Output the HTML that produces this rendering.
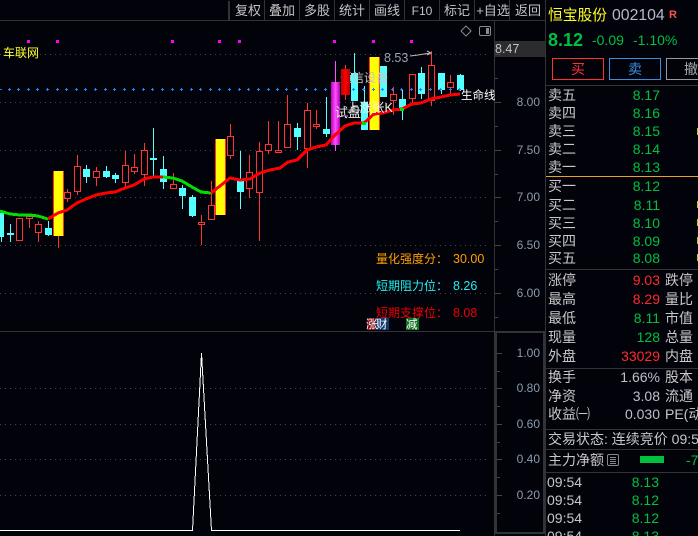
<!DOCTYPE html>
<html><head><meta charset="utf-8"><style>
html,body{margin:0;padding:0;background:#02020a;overflow:hidden}
svg{display:block}
text{font-family:"Liberation Sans","Noto Sans CJK SC",sans-serif;font-size:14px}
.tb{fill:#c4c4c4;font-size:13px;text-anchor:middle}
.ax{fill:#8c9bab;font-size:12px;text-anchor:end}
.lb{fill:#c8c8c8}
.g{fill:#00c040}
.r{fill:#ff2a2a}
.e{text-anchor:end;font-size:14px}
</style></head><body>
<svg width="698" height="536" viewBox="0 0 698 536" xmlns="http://www.w3.org/2000/svg">
<defs>
<linearGradient id="mg" x1="0" x2="1" y1="0" y2="0"><stop offset="0" stop-color="#c000c0"/><stop offset=".5" stop-color="#ff50ff"/><stop offset="1" stop-color="#b000b0"/></linearGradient>
<linearGradient id="rg" x1="0" x2="1" y1="0" y2="0"><stop offset="0" stop-color="#c00000"/><stop offset=".5" stop-color="#ff0000"/><stop offset="1" stop-color="#b00000"/></linearGradient>
</defs>
<rect width="698" height="536" fill="#02020a"/>

<!-- frame -->
<g shape-rendering="crispEdges">
<path d="M0 20.5H545M0 331.5H545M494.5 21V536M545.5 0V536" stroke="#333" fill="none"/>
<path d="M229 1V20" stroke="#333" stroke-width="2"/>
<path d="M264.5 0V20M299.5 0V20M334.5 0V20M369.5 0V20M404.5 0V20M439.5 0V20M474.5 0V20M509.5 0V20" stroke="#333"/>
<rect x="495" y="41" width="50" height="16" fill="#2c2c2f"/>
<rect x="496" y="332" width="48" height="201" fill="none" stroke="#333" stroke-width="2"/>
<path d="M0 54.5H490M0 102.5H490M0 150.5H490M0 197.5H490M0 245.5H490M0 293.5H490M0 388.5H490M0 424.5H490M0 459.5H490M0 495.5H490" stroke="#444" stroke-dasharray="1 4" fill="none"/>
<path d="M495 54.5h6M495 78.5h3M495 102.5h6M495 126.5h3M495 150.5h6M495 174.5h3M495 197.5h6M495 221.5h3M495 245.5h6M495 269.5h3M495 293.5h6M495 317.5h3M497 353.5h5M497 371.5h3M497 388.5h5M497 406.5h3M497 424.5h5M497 442.5h3M497 459.5h5M497 477.5h3M497 495.5h5M497 513.5h3" stroke="#444" fill="none"/>
<!-- magenta marks -->
<path d="M27 40h3v3h-3zM56 40h3v3h-3zM171 40h3v3h-3zM218 40h3v3h-3zM238 40h3v3h-3zM333 40h3v3h-3zM372 40h3v3h-3zM410 40h3v3h-3z" fill="#ff00ff"/>

<!-- red hollow candles -->
<path fill="none" stroke="#ff3333" d="M16.5 218.5h6v22h-6zM26.5 216.5h6v2h-6zM29.5 218V228M35.5 224.5h6v8h-6zM38.5 221V224M38.5 232V242M64.5 192.5h6v6h-6zM67.5 189V192M67.5 198V202M74.5 166.5h6v25h-6zM77.5 155V166M77.5 191V195M93.5 171.5h6v6h-6zM96.5 167V171M96.5 177V186M122.5 165.5h6v17h-6zM125.5 151V165M125.5 182V187M131.5 167.5h6v4h-6zM134.5 154V167M134.5 171V174M141.5 150.5h6v24h-6zM144.5 143V150M144.5 174V186M170.5 184.5h6v4h-6zM173.5 173V184M198.5 222.5h6v2h-6zM201.5 215V222M201.5 225V245M208.5 205.5h6v14h-6zM211.5 181V205M211.5 219V220M227.5 136.5h6v19h-6zM230.5 124V136M230.5 155V159M246.5 172.5h6v16h-6zM249.5 155V172M249.5 188V198M256.5 151.5h6v41h-6zM259.5 142V151M259.5 192V241M265.5 144.5h6v6h-6zM268.5 121V144M268.5 150V154M275.5 150.5h6v2h-6zM278.5 121V150M284.5 124.5h6v23h-6zM287.5 95V124M304.5 110.5h6v38h-6zM307.5 103V110M307.5 149V168M313.5 124.5h6v2h-6zM316.5 110V124M316.5 126V129M390.5 94.5h6v6h-6zM393.5 87V94M393.5 100V115M409.5 74.5h6v24h-6zM412.5 98V103M428.5 65.5h6v35h-6zM431.5 51V65M431.5 100V106M447.5 82.5h6v5h-6zM450.5 75V82M450.5 87V95M58.5 236V248"/>
<!-- cyan wicks -->
<path fill="none" stroke="#54ffff" d="M1.5 237V242M10.5 224V242M48.5 221V236M86.5 165V183M106.5 166V178M115.5 173V183M153.5 128V176M163.5 156V189M182.5 185V209M192.5 195V217M240.5 151V209M297.5 123V150M326.5 97V137M354.5 53V101M364.5 86V102M402.5 89V120M421.5 67V99M441.5 73V94M460.5 74V91"/>
<!-- cyan bodies -->
<path fill="#54ffff" d="M0 213h4v24H0zM7 233h7v2H7zM45 228h7v7h-7zM83 169h7v8h-7zM103 171h7v6h-7zM112 175h7v4h-7zM150 158h7v2h-7zM160 169h7v13h-7zM179 188h7v8h-7zM189 197h7v19h-7zM237 180h7v12h-7zM294 128h7v9h-7zM323 129h7v5h-7zM351 73h7v28h-7zM361 102h7v28h-7zM380 66h7v31h-7zM399 99h7v10h-7zM418 73h7v21h-7zM438 73h7v17h-7zM457 75h7v15h-7z"/>
<!-- yellow -->
<rect x="53" y="171" width="11" height="65" fill="#ff3030"/><rect x="54" y="171" width="9" height="65" fill="#ffff00"/>
<rect x="215" y="139" width="11" height="76" fill="#ff3030"/><rect x="216" y="139" width="9" height="76" fill="#ffff00"/>
<rect x="369" y="57" width="11" height="73" fill="#ff3030"/><rect x="370" y="57" width="9" height="73" fill="#ffff00"/>
</g>
<text x="340" y="82" style="font-size:12px;fill:#c8c8c8">通信设备</text>
<g shape-rendering="crispEdges">
<!-- magenta & red -->
<path d="M335.5 61V151" stroke="#ff50ff"/><rect x="331" y="82" width="9" height="63" fill="url(#mg)"/>
<path d="M345.5 65V100" stroke="#ff3030"/><rect x="341" y="69" width="9" height="26" fill="url(#rg)"/>
<!-- blue plus -->
<path fill="none" stroke="#1e80ff" d="M-1 89.5h3M8 89.5h3M9.5 88v3M17 89.5h3M18.5 88v3M27 89.5h3M28.5 88v3M36 89.5h3M37.5 88v3M46 89.5h3M47.5 88v3M56 89.5h3M57.5 88v3M65 89.5h3M66.5 88v3M75 89.5h3M76.5 88v3M84 89.5h3M85.5 88v3M94 89.5h3M95.5 88v3M104 89.5h3M105.5 88v3M113 89.5h3M114.5 88v3M123 89.5h3M124.5 88v3M132 89.5h3M133.5 88v3M142 89.5h3M143.5 88v3M151 89.5h3M152.5 88v3M161 89.5h3M162.5 88v3M171 89.5h3M172.5 88v3M180 89.5h3M181.5 88v3M190 89.5h3M191.5 88v3M199 89.5h3M200.5 88v3M209 89.5h3M210.5 88v3M218 89.5h3M219.5 88v3M228 89.5h3M229.5 88v3M238 89.5h3M239.5 88v3M247 89.5h3M248.5 88v3M257 89.5h3M258.5 88v3M267 89.5h3M268.5 88v3M276 89.5h3M277.5 88v3M285 89.5h3M286.5 88v3M295 89.5h3M296.5 88v3M305 89.5h3M306.5 88v3M314 89.5h3M315.5 88v3M324 89.5h3M325.5 88v3M352 89.5h3M353.5 88v3M362 89.5h3M363.5 88v3M372 89.5h3M373.5 88v3M381 89.5h3M382.5 88v3M391 89.5h3M392.5 88v3M400 89.5h3M401.5 88v3M410 89.5h3M411.5 88v3M419 89.5h3M420.5 88v3M429 89.5h3M430.5 88v3M439 89.5h3M440.5 88v3M449 89.5h3M450.5 88v3M458 89.5h3M459.5 88v3"/>
</g>

<!-- MA line -->
<g fill="none" stroke-width="3" stroke-linejoin="bevel" shape-rendering="crispEdges">
<polyline stroke="#00e000" points="0,211 10,214 20,215 30,215 38,216 48,219"/>
<polyline stroke="#ff0000" points="48,219 58,213 67,210 77,203 86,199 96,195 106,193 115,192 125,188 134,185 144,179 153,177 163,177"/>
<polyline stroke="#00e000" points="163,177 173,178 182,181 192,187 201,192 211,193"/>
<polyline stroke="#ff0000" points="211,193 220,186 230,178 240,180 250,179 260,173 270,170 280,168 288,162 297,160 307,150 316,147 326,145 335,135 345,126 354,123 364,123 374,114 383,113 393,110 402,109 412,104 421,103 431,99 441,97 450,95 460,94"/>
<path stroke="#00e000" d="M362 123.5h4M400 109.5h4"/>
</g>

<!-- lower chart -->
<g fill="none" stroke="#fff" shape-rendering="crispEdges">
<path d="M0 530.5H192.5L201.5 353L211.5 530.5H460"/>
</g>

<!-- icons -->
<path d="M466 26l5 5-5 5-5-5z" fill="none" stroke="#8a8a8a"/>
<rect x="479.5" y="26.5" width="11" height="9" rx="1.5" fill="none" stroke="#8a8a8a"/><rect x="486" y="28" width="3" height="6" fill="#8a8a8a"/>

<!-- toolbar -->
<text class="tb" x="248" y="15">复权</text>
<text class="tb" x="282" y="15">叠加</text>
<text class="tb" x="317" y="15">多股</text>
<text class="tb" x="352" y="15">统计</text>
<text class="tb" x="387" y="15">画线</text>
<text class="tb" x="422" y="15" style="font-size:12px">F10</text>
<text class="tb" x="457" y="15">标记</text>
<text class="tb" x="493" y="15">+自选</text>
<text class="tb" x="528" y="15">返回</text>

<!-- chart labels -->
<text x="3" y="57" style="font-size:12px;fill:#ffff30">车联网</text>
<text x="384" y="62" style="font-size:12.5px;fill:#9aa4ae">8.53</text>
<path d="M410 56l8-1 6-1 7-1m-4-2l4 2-4 2" fill="none" stroke="#bbb"/>
<text x="335" y="117" style="font-size:13px;fill:#e8e8e8">试盘</text>
<text x="347" y="112" style="font-size:12.5px;fill:#f4f4f4">上涨张K</text>
<text x="461" y="99" style="font-size:11.5px;fill:#fff">生命线</text>
<text x="376" y="263" style="font-size:12px;fill:#ffa000">量化强度分：</text><text x="453" y="263" style="font-size:12.5px;fill:#ffa000">30.00</text>
<text x="376" y="290" style="font-size:12px;fill:#20f0f0">短期阻力位：</text><text x="453" y="290" style="font-size:12.5px;fill:#20f0f0">8.26</text>
<text x="376" y="317" style="font-size:12px;fill:#ee0000">短期支撑位：</text><text x="453" y="317" style="font-size:12.5px;fill:#ee0000">8.08</text>
<g shape-rendering="crispEdges"><rect x="367" y="318" width="9" height="12" fill="#801018"/><rect x="376" y="318" width="13" height="12" fill="#103870"/><rect x="406" y="318" width="13" height="12" fill="#107020"/></g>
<text x="366" y="328" style="font-size:11.5px;fill:#fff">涨</text>
<text x="376" y="328" style="font-size:11.5px;fill:#fff">财</text>
<text x="406" y="328" style="font-size:11.5px;fill:#fff">减</text>

<!-- axis -->
<text x="495" y="53" style="font-size:12.5px;fill:#c4c4c4">8.47</text>
<text class="ax" x="540" y="106">8.00</text>
<text class="ax" x="540" y="154">7.50</text>
<text class="ax" x="540" y="201">7.00</text>
<text class="ax" x="540" y="249">6.50</text>
<text class="ax" x="540" y="297">6.00</text>
<text class="ax" x="540" y="357">1.00</text>
<text class="ax" x="540" y="392">0.80</text>
<text class="ax" x="540" y="428">0.60</text>
<text class="ax" x="540" y="463">0.40</text>
<text class="ax" x="540" y="499">0.20</text>

<!-- right panel -->
<text x="548" y="20" style="font-size:14.75px;fill:#ffff20">恒宝股份</text>
<text x="612" y="20" style="font-size:15.8px;fill:#b4bcc4">002104</text>
<text x="669" y="18" style="font-size:11px;font-weight:bold;fill:#ff5050">R</text>
<text x="548" y="46" style="font-size:18px;font-weight:bold" class="g">8.12</text>
<text x="592" y="45" style="font-size:14px" class="g">-0.09</text>
<text x="633" y="45" style="font-size:14px" class="g">-1.10%</text>
<g shape-rendering="crispEdges" fill="none">
<rect x="552.5" y="58.5" width="51" height="21" stroke="#ff3030"/>
<rect x="609.5" y="58.5" width="51" height="21" stroke="#3a8ee0"/>
<rect x="666.5" y="58.5" width="51" height="21" stroke="#999"/>
<path d="M546 85.5H698M546 269.5H698M546 368.5H698M546 429.5H698M546 449.5H698M546 472.5H698" stroke="#333"/>
<path d="M546 176.5H698" stroke="#f0a020"/>
<path d="M697 128h1v7h-1zM697 201h1v7h-1zM697 219h1v7h-1zM697 237h1v7h-1zM697 254h1v7h-1z" fill="#c8c820"/>
</g>
<text x="571" y="74" style="fill:#ff3030">买</text>
<text x="628" y="74" style="fill:#3a8ee0">卖</text>
<text x="684" y="74" style="fill:#aaa">撤</text>

<text class="lb" x="548" y="100">卖五</text><text class="g e" x="660" y="100">8.17</text>
<text class="lb" x="548" y="118">卖四</text><text class="g e" x="660" y="118">8.16</text>
<text class="lb" x="548" y="136">卖三</text><text class="g e" x="660" y="136">8.15</text>
<text class="lb" x="548" y="154">卖二</text><text class="g e" x="660" y="154">8.14</text>
<text class="lb" x="548" y="172">卖一</text><text class="g e" x="660" y="172">8.13</text>
<text class="lb" x="548" y="191">买一</text><text class="g e" x="660" y="191">8.12</text>
<text class="lb" x="548" y="210">买二</text><text class="g e" x="660" y="210">8.11</text>
<text class="lb" x="548" y="228">买三</text><text class="g e" x="660" y="228">8.10</text>
<text class="lb" x="548" y="246">买四</text><text class="g e" x="660" y="246">8.09</text>
<text class="lb" x="548" y="263">买五</text><text class="g e" x="660" y="263">8.08</text>

<text class="lb" x="548" y="285">涨停</text><text class="r e" x="660" y="285">9.03</text><text class="lb" x="665" y="285">跌停</text>
<text class="lb" x="548" y="304">最高</text><text class="r e" x="660" y="304">8.29</text><text class="lb" x="665" y="304">量比</text>
<text class="lb" x="548" y="323">最低</text><text class="g e" x="660" y="323">8.11</text><text class="lb" x="665" y="323">市值</text>
<text class="lb" x="548" y="342">现量</text><text class="g e" x="660" y="342">128</text><text class="lb" x="665" y="342">总量</text>
<text class="lb" x="548" y="361">外盘</text><text class="r e" x="660" y="361">33029</text><text class="lb" x="665" y="361">内盘</text>

<text class="lb" x="548" y="382">换手</text><text class="e" x="660" y="382" style="fill:#b8c0c8">1.66%</text><text class="lb" x="665" y="382">股本</text>
<text class="lb" x="548" y="401">净资</text><text class="e" x="660" y="401" style="fill:#b8c0c8">3.08</text><text class="lb" x="665" y="401">流通</text>
<text class="lb" x="548" y="419">收益㈠</text><text class="e" x="660" y="419" style="fill:#b8c0c8">0.030</text><text class="lb" x="665" y="419">PE(动</text>

<text x="548" y="444" style="font-size:14px;fill:#c8c8c8">交易状态: 连续竞价 09:54</text>
<text class="lb" x="548" y="465">主力净额</text>
<rect x="607.5" y="454.5" width="11" height="11" rx="1.5" fill="none" stroke="#888"/>
<path d="M610 457.5h6M610 459.5h6M610 461.5h6M610 463.5h6" stroke="#888" shape-rendering="crispEdges"/>
<rect x="640" y="456" width="24" height="7" fill="#00c040"/>
<text x="686" y="465" class="g">-7</text>

<text class="lb" x="547" y="487">09:54</text><text class="g e" x="659" y="487">8.13</text>
<text class="lb" x="547" y="505">09:54</text><text class="g e" x="659" y="505">8.12</text>
<text class="lb" x="547" y="523">09:54</text><text class="g e" x="659" y="523">8.12</text>
<text class="lb" x="547" y="541">09:54</text><text class="g e" x="659" y="541">8.13</text>
</svg>
</body></html>
